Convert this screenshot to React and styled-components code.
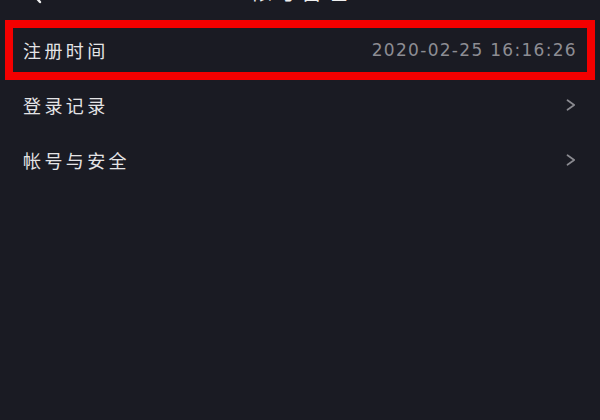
import React from 'react';
import styled, { createGlobalStyle } from 'styled-components';

const GlobalStyle = createGlobalStyle`
    html, body {
        margin: 0;
        padding: 0;
        background: #1a1b23;
    }
`

const Page = styled.div`
    width: 600px;
    height: 420px;
    background: #1a1b23;
    overflow: hidden;
    font-family: "Noto Sans CJK SC", "Noto Sans", sans-serif;
`

// the nav bar is scrolled almost out of view, only the bottom of its glyphs shows
const NavBar = styled.div`
    height: 20px;
    overflow: hidden;
    display: flex;
    align-items: flex-end;
    padding: 0 0 0 30px;
`

const BackIcon = styled.svg`
    width: 14px;
    height: 20px;
    margin-bottom: 16px;
    flex: none;
`

const Title = styled.div`
    flex: 1;
    text-align: center;
    color: #eeeeee;
    font-size: 22px;
    line-height: 22px;
    letter-spacing: 3px;
    margin: 0 44px 20px 0;
`

const List = styled.div`
    display: flex;
    flex-direction: column;
    padding-top: 2px;
`

const Row = styled.div`
    position: relative;
    height: 55px;
    display: flex;
    align-items: center;
    justify-content: space-between;
    padding: 0 24px 0 23px;
`

const Label = styled.span`
    color: #e4e4e6;
    font-size: 18px;
    letter-spacing: 3.4px;
`

const Value = styled.span`
    color: #8d8d93;
    font-family: "DejaVu Sans", "Noto Sans", sans-serif;
    font-size: 17px;
    letter-spacing: 1.3px;
    margin-right: -1px;
`

const Highlight = styled.div`
    position: absolute;
    left: 5px;
    right: 5px;
    top: -2px;
    height: 60px;
    box-sizing: border-box;
    border: 8px solid #f40000;
    pointer-events: none;
`

const Chevron = () => (
    <svg width="10" height="12" viewBox="0 0 10 12">
        <path d="M1.5 1.2 L8.2 6 L1.5 10.8" fill="none" stroke="#8a8a90" strokeWidth="1.7" strokeLinecap="round" strokeLinejoin="round" />
    </svg>
)

const rows = [
    { label: '注册时间', value: '2020-02-25 16:16:26', marked: true },
    { label: '登录记录', arrow: true },
    { label: '帐号与安全', arrow: true },
]

export default function App() {
    return (
        <Page>
            <GlobalStyle />
            <NavBar>
                <BackIcon viewBox="0 0 14 20">
                    <path d="M10 2 L3 10 L10 18" fill="none" stroke="#eeeeee" strokeWidth="2.4" strokeLinecap="round" strokeLinejoin="round" />
                </BackIcon>
                <Title>帐号管理</Title>
            </NavBar>
            <List>
                {rows.map(row => (
                    <Row key={row.label}>
                        <Label>{row.label}</Label>
                        {row.value && <Value>{row.value}</Value>}
                        {row.arrow && <Chevron />}
                        {row.marked && <Highlight />}
                    </Row>
                ))}
            </List>
        </Page>
    )
}
